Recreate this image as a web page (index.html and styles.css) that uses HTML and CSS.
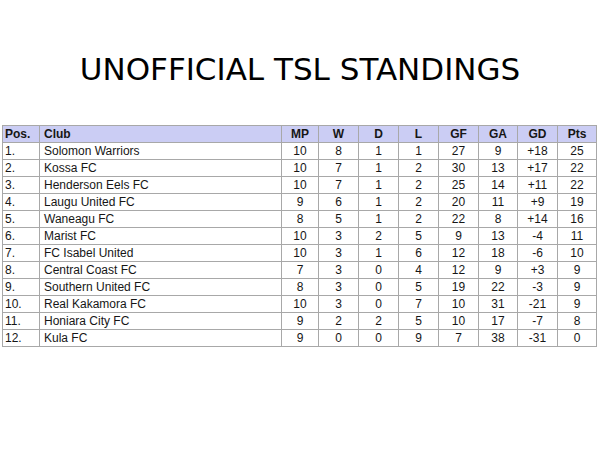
FILE: index.html
```html
<!DOCTYPE html>
<html>
<head>
<meta charset="utf-8">
<link rel="stylesheet" href="styles.css">
</head>
<body>
<h1 class="title">UNOFFICIAL TSL STANDINGS</h1>
<table class="standings">
  <colgroup>
    <col class="c-pos"><col class="c-club"><col class="c-mp"><col class="c-n"><col class="c-n"><col class="c-n"><col class="c-n"><col class="c-ga"><col class="c-n"><col class="c-pts">
  </colgroup>
  <thead>
    <tr><th class="l">Pos.</th><th class="l">Club</th><th>MP</th><th>W</th><th>D</th><th>L</th><th>GF</th><th>GA</th><th>GD</th><th>Pts</th></tr>
  </thead>
  <tbody>
    <tr><td class="l">1.</td><td class="club">Solomon Warriors</td><td>10</td><td>8</td><td>1</td><td>1</td><td>27</td><td>9</td><td>+18</td><td>25</td></tr>
    <tr><td class="l">2.</td><td class="club">Kossa FC</td><td>10</td><td>7</td><td>1</td><td>2</td><td>30</td><td>13</td><td>+17</td><td>22</td></tr>
    <tr><td class="l">3.</td><td class="club">Henderson Eels FC</td><td>10</td><td>7</td><td>1</td><td>2</td><td>25</td><td>14</td><td>+11</td><td>22</td></tr>
    <tr><td class="l">4.</td><td class="club">Laugu United FC</td><td>9</td><td>6</td><td>1</td><td>2</td><td>20</td><td>11</td><td>+9</td><td>19</td></tr>
    <tr><td class="l">5.</td><td class="club">Waneagu FC</td><td>8</td><td>5</td><td>1</td><td>2</td><td>22</td><td>8</td><td>+14</td><td>16</td></tr>
    <tr><td class="l">6.</td><td class="club">Marist FC</td><td>10</td><td>3</td><td>2</td><td>5</td><td>9</td><td>13</td><td>-4</td><td>11</td></tr>
    <tr><td class="l">7.</td><td class="club">FC Isabel United</td><td>10</td><td>3</td><td>1</td><td>6</td><td>12</td><td>18</td><td>-6</td><td>10</td></tr>
    <tr><td class="l">8.</td><td class="club">Central Coast FC</td><td>7</td><td>3</td><td>0</td><td>4</td><td>12</td><td>9</td><td>+3</td><td>9</td></tr>
    <tr><td class="l">9.</td><td class="club">Southern United FC</td><td>8</td><td>3</td><td>0</td><td>5</td><td>19</td><td>22</td><td>-3</td><td>9</td></tr>
    <tr><td class="l">10.</td><td class="club">Real Kakamora FC</td><td>10</td><td>3</td><td>0</td><td>7</td><td>10</td><td>31</td><td>-21</td><td>9</td></tr>
    <tr><td class="l">11.</td><td class="club">Honiara City FC</td><td>9</td><td>2</td><td>2</td><td>5</td><td>10</td><td>17</td><td>-7</td><td>8</td></tr>
    <tr><td class="l">12.</td><td class="club">Kula FC</td><td>9</td><td>0</td><td>0</td><td>9</td><td>7</td><td>38</td><td>-31</td><td>0</td></tr>
  </tbody>
</table>
</body>
</html>
```
FILE: styles.css
```css
html, body {
  margin: 0;
  padding: 0;
  background: #ffffff;
}
body {
  width: 600px;
  height: 450px;
  overflow: hidden;
}
.title {
  margin: 51px 0 0 0;
  font-family: "DejaVu Sans", sans-serif;
  font-weight: normal;
  font-size: 31px;
  line-height: 36px;
  text-align: center;
  color: #000000;
}
.standings {
  margin: 38px 0 0 2px;
  width: 594px;
  table-layout: fixed;
  border-collapse: collapse;
  font-family: "Liberation Sans", Arial, sans-serif;
  font-size: 12px;
  color: #161616;
}
.c-pos { width: 37px; }
.c-club { width: 242px; }
.c-mp { width: 37px; }
.c-n { width: 40px; }
.c-ga { width: 39px; }
.c-pts { width: 39px; }
.standings th,
.standings td {
  border: 1px solid #a8a8a8;
  height: 15px;
  line-height: 15px;
  padding: 1px 2px 0 2px;
  text-align: center;
  white-space: nowrap;
  overflow: hidden;
}
.standings th {
  background: #cbcdf4;
  font-weight: bold;
}
.standings .l {
  text-align: left;
}
.standings th.l + th.l,
.standings td.club {
  text-align: left;
  padding-left: 4px;
}
```
